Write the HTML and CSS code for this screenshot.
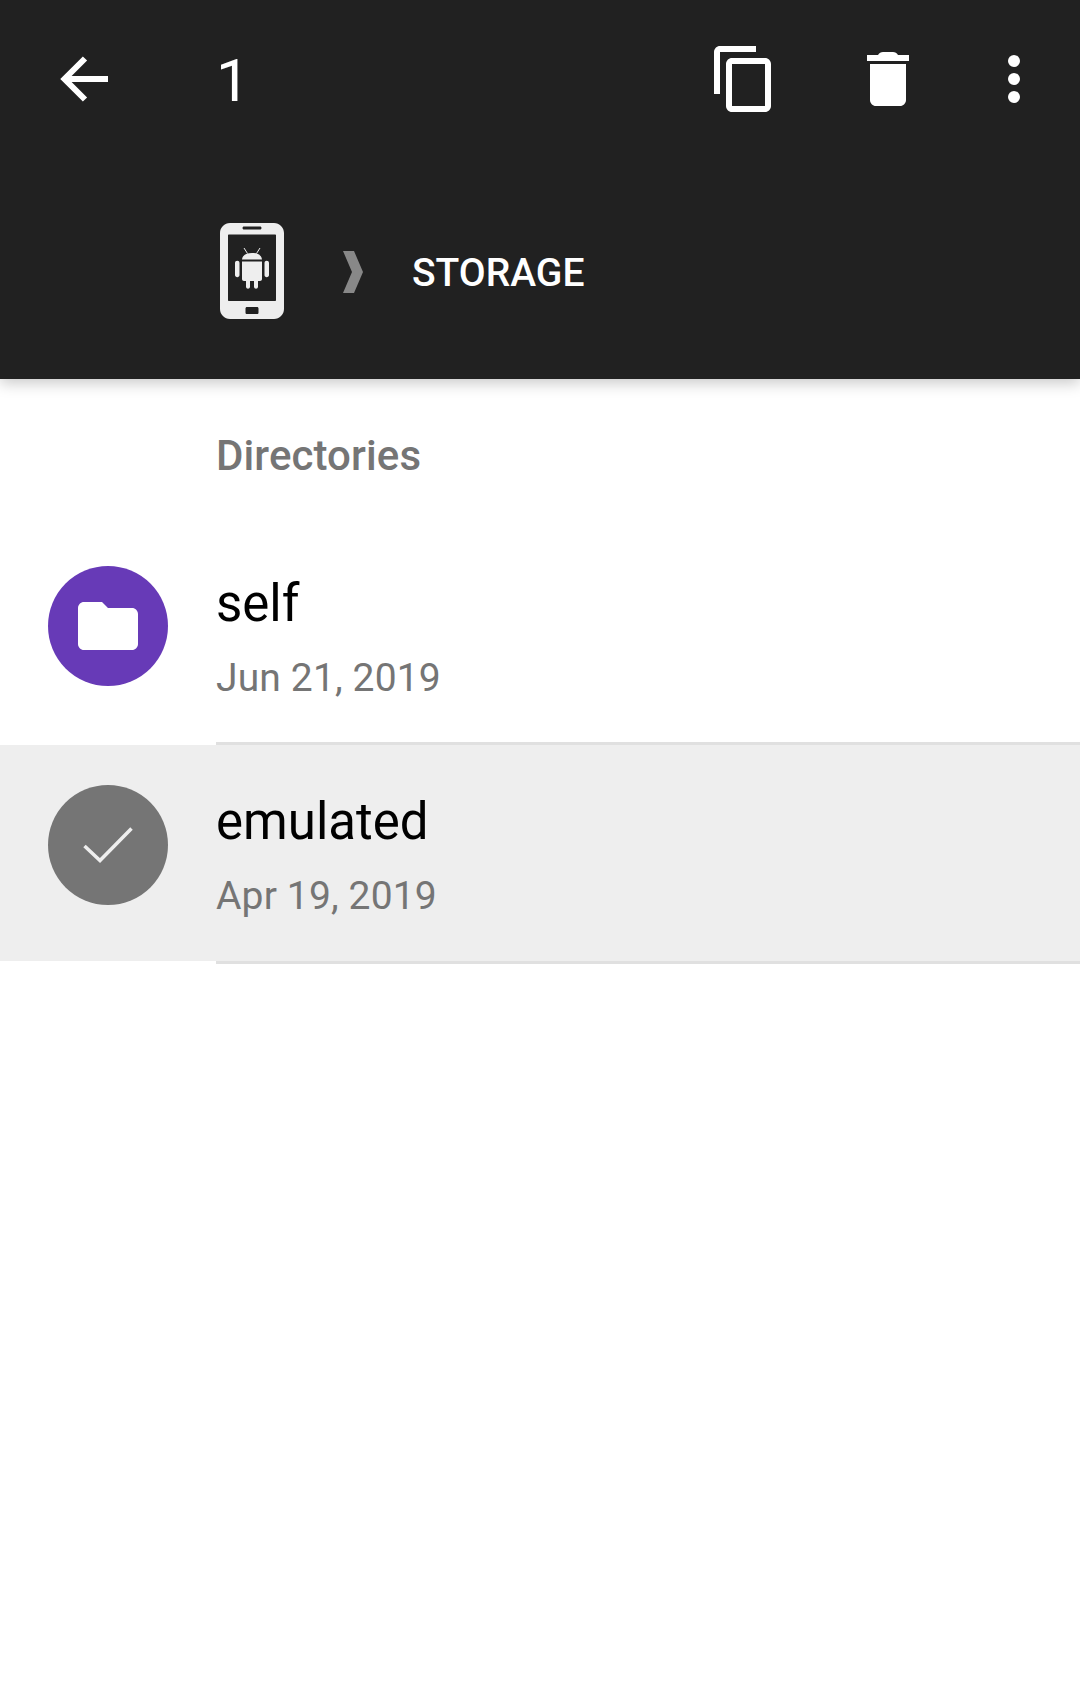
FILE: index.html
```html
<!DOCTYPE html>
<html lang="en">
<head>
    <meta charset="UTF-8">
    <title>Directories</title>
    <link rel="stylesheet" href="styles.css">
</head>
<body>

<header class="header">
    <div class="toolbar">
        <svg class="back-icon" viewBox="0 0 48 48"><path d="M48 24H5M25 3.500L4.500 24 25 44.500"/></svg>
        <span class="count">1</span>
        <svg class="copy-icon" viewBox="0 0 57 66"><path d="M42 0H6C2.700 0 0 2.700 0 6v42h6V6h36z"/><path d="M51 12H18c-3.300 0-6 2.700-6 6v42c0 3.300 2.700 6 6 6h33c3.300 0 6-2.700 6-6V18c0-3.300-2.700-6-6-6zm0 48H18V18h33z"/></svg>
        <svg class="trash-icon" viewBox="0 0 42 54"><path d="M0 3h11c1-2 3-3 5-3h10c2 0 4 1 5 3h11v6H0zM3 12h36v36c0 3.300-2.700 6-6 6H9c-3.300 0-6-2.700-6-6z"/></svg>
        <svg class="more-icon" viewBox="0 0 12 48"><circle cx="6" cy="6" r="6"/><circle cx="6" cy="24" r="6"/><circle cx="6" cy="42" r="6"/></svg>
    </div>
    <div class="crumbs">
        <svg class="phone-icon" viewBox="0 0 64 96">
            <path fill-rule="evenodd" d="M10 0h44c5.500 0 10 4.500 10 10v76c0 5.500-4.500 10-10 10H10C4.500 96 0 91.500 0 86V10C0 4.500 4.500 0 10 0zM9 11.500h46c.6 0 1 .4 1 1V77c0 .6-.4 1-1 1H9c-.6 0-1-.4-1-1V12.500c0-.6.4-1 1-1zM24 3.500c-1 0-1.500.7-1.500 1.500S23 6.500 24 6.500h16c1 0 1.500-.7 1.500-1.500S41 3.500 40 3.500zM27 84c-1 0-1.500.7-1.500 1.500v4c0 1 .5 1.500 1.500 1.500h10c1 0 1.500-.5 1.500-1.500v-4c0-.8-.5-1.500-1.500-1.500z"/>
            <path d="M22 36.500c.3-3.700 3.500-6.500 10-6.500s9.700 2.800 10 6.500zM22 38.500h20V56c0 1.200-.8 2-2 2h-2v5.500c0 3-4 3-4 0V58h-4v5.500c0 3-4 3-4 0V58h-2c-1.200 0-2-.8-2-2zM15 40c0-1.300 1-2.200 2.300-2.200s2.200.9 2.200 2.200v12c0 1.300-1 2.200-2.200 2.200S15 53.300 15 52zM44.500 40c0-1.300 1-2.200 2.200-2.200S49 38.700 49 40v12c0 1.300-1 2.200-2.300 2.200s-2.200-.9-2.200-2.200z"/>
            <path class="phone-feeler" d="M24 25l3.500 5.500M40 25l-3.500 5.500"/>
        </svg>
        <svg class="crumb-arrow" viewBox="0 0 20 42"><path d="M0 0h11l9 21-9 21H0l9-21z"/></svg>
        <span class="crumb-label">STORAGE</span>
    </div>
</header>

<main>
    <div class="section-title">Directories</div>

    <div class="row">
        <div class="avatar avatar-folder">
            <svg class="folder-icon" viewBox="0 0 60 48"><path d="M6 0h18l6 6h24c3.300 0 6 2.700 6 6v30c0 3.300-2.700 6-6 6H6c-3.300 0-6-2.700-6-6V6c0-3.300 2.700-6 6-6z"/></svg>
        </div>
        <div class="row-text">
            <div class="row-name">self</div>
            <div class="row-date">Jun 21, 2019</div>
        </div>
    </div>

    <div class="row selected">
        <div class="avatar avatar-checked">
            <svg class="check-icon" viewBox="0 0 50 36"><path d="M1.500 19L17 33.500 48.500 1.500"/></svg>
        </div>
        <div class="row-text">
            <div class="row-name">emulated</div>
            <div class="row-date">Apr 19, 2019</div>
        </div>
    </div>
</main>

</body>
</html>
```

FILE: styles.css
```css
* {
    box-sizing: border-box;
}
html, body {
    margin: 0;
    height: 100%;
}
body {
    font-family: Roboto, "Liberation Sans", sans-serif;
    background-color: #fff;
    overflow: hidden;
}
.header {
    height: 379px;
    background-color: #212121;
    box-shadow: 0 4px 14px rgba(0,0,0,0.22);
    position: relative;
}
.toolbar {
    display: flex;
    align-items: flex-start;
    height: 223px;
    fill: #fff;
}
.back-icon {
    width: 48px;
    height: 48px;
    margin: 55px 0 0 60px;
    fill: none;
    stroke: #fff;
    stroke-width: 6px;
}
.count {
    color: #fff;
    font-size: 60px;
    line-height: 70px;
    margin: 46px 0 0 108px;
    width: 498px;
}
.copy-icon {
    width: 57px;
    height: 66px;
    margin: 46px 0 0 0;
}
.trash-icon {
    width: 42px;
    height: 54px;
    margin: 52px 0 0 96px;
}
.more-icon {
    width: 12px;
    height: 48px;
    margin: 55px 0 0 99px;
}
.crumbs {
    display: flex;
    align-items: center;
    height: 96px;
    padding-left: 220px;
}
.phone-icon {
    width: 64px;
    height: 96px;
    fill: #eee;
}
.phone-feeler {
    fill: none;
    stroke: #eee;
    stroke-width: 1px;
}
.crumb-arrow {
    width: 20px;
    height: 42px;
    fill: #888;
    margin-left: 59px;
    margin-top: 2px;
}
.crumb-label {
    color: #fff;
    font-size: 39px;
    font-weight: 500;
    margin-left: 49px;
    margin-top: 4px;
}
.section-title {
    color: #757575;
    font-size: 42px;
    font-weight: 500;
    letter-spacing: 0.1px;
    line-height: 50px;
    padding: 52px 0 0 216px;
    height: 151px;
}
.row {
    display: flex;
    height: 215px;
    position: relative;
}
.row::after {
    content: "";
    position: absolute;
    left: 216px;
    right: 0;
    bottom: 0;
    height: 3px;
    background-color: #e0e0e0;
}
.selected {
    background-color: #eee;
    height: 216px;
}
.selected::after {
    bottom: -3px;
}
.avatar {
    width: 120px;
    height: 120px;
    border-radius: 50%;
    margin: 36px 0 0 48px;
    display: flex;
    align-items: center;
    justify-content: center;
    flex-shrink: 0;
}
.selected .avatar {
    margin-top: 40px;
}
.avatar-folder {
    background-color: #673ab7;
}
.avatar-checked {
    background-color: #757575;
}
.folder-icon {
    width: 60px;
    height: 48px;
    fill: #fff;
}
.check-icon {
    width: 50px;
    height: 36px;
    fill: none;
    stroke: #eee;
    stroke-width: 3.500px;
}
.row-text {
    margin-left: 48px;
    padding-top: 44px;
}
.selected .row-text {
    padding-top: 47px;
}
.row-name {
    color: #000;
    font-size: 51px;
    line-height: 60px;
}
.row-date {
    color: #757575;
    font-size: 39px;
    letter-spacing: 0.15px;
    line-height: 46px;
    margin-top: 21px;
}
```
